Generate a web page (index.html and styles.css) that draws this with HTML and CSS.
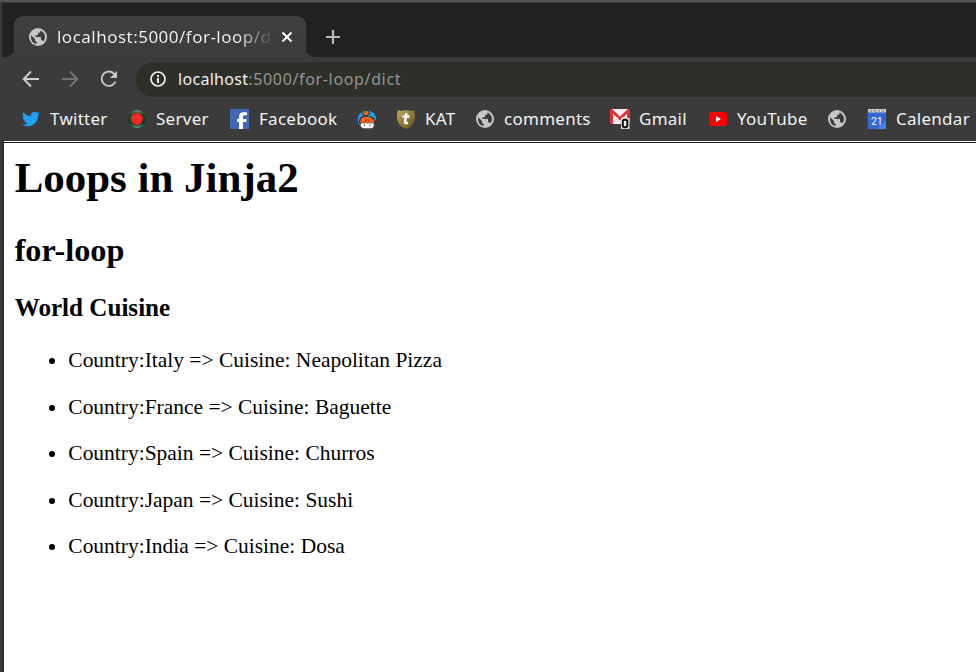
FILE: index.html
```html
<!DOCTYPE html>
<html lang="en">
<head>
<meta charset="utf-8">
<title>Loops in Jinja2</title>
<link rel="stylesheet" href="styles.css">
</head>
<body>
<svg class="defs" aria-hidden="true">
  <symbol id="globe" viewBox="0 0 18 18">
    <circle cx="9" cy="9" r="9" fill="#c6c6c6"/>
    <path d="M2 7.300 6 11v1c0 1 .6 1.600 1.600 1.700V16C4.300 15.500 2 12.700 2 9zM11.300 2.400C14 3.300 16 5.800 16 9c0 1.600-.6 3.200-1.600 4.400-.3-.7-.8-1.100-1.600-1.100H12V10c0-.7-.4-1-1-1H6.500V7.300h1.600c.6 0 1-.4 1-1V4.800h1.300c.7 0 1.200-.8.900-2.400z" fill="#3b3b3b"/>
  </symbol>
</svg>
<div class="window">
  <header class="tabstrip">
    <div class="tab">
      <svg class="tab-icon"><use href="#globe"/></svg>
      <span class="tab-title">localhost:5000/for-loop/d</span>
      <svg class="close" viewBox="0 0 12 12"><path d="M1.500 1.500l9 9M10.500 1.500l-9 9" stroke="#fff" stroke-width="2"/></svg>
    </div>
    <svg class="plus" viewBox="0 0 16 16"><path d="M8 1v14M1 8h14" stroke="#b8b8b8" stroke-width="2.200"/></svg>
  </header>
  <div class="toolbar">
    <svg class="nav" viewBox="0 0 18 18"><path d="M17 9H2M9 1.500 1.700 9 9 16.500" fill="none" stroke="#d0d0d0" stroke-width="1.900"/></svg>
    <svg class="nav" viewBox="0 0 18 18"><path d="M1 9h15M9 1.500 16.300 9 9 16.500" fill="none" stroke="#757575" stroke-width="1.900"/></svg>
    <svg class="nav" viewBox="0 0 18 18"><path d="M15.500 11.500A7.200 7.200 0 1 1 14.500 4.200" fill="none" stroke="#c8c8c8" stroke-width="1.900"/><path d="M17 1v7h-7z" fill="#c8c8c8"/></svg>
    <div class="omnibox">
      <svg class="info" viewBox="0 0 16 16"><circle cx="8" cy="8" r="7" fill="none" stroke="#eee" stroke-width="1.700"/><path d="M8 7v5M8 4v2" stroke="#eee" stroke-width="2"/></svg>
      <span class="url"><b>localhost</b>:5000/for-loop/dict</span>
    </div>
  </div>
  <nav class="bookmarks">
    <div class="bm bm-twitter"><svg viewBox="0 0 24 24"><path fill="#1da1f2" d="M23.950 4.600a10 10 0 0 1-2.800.8 4.900 4.900 0 0 0 2.160-2.700 10 10 0 0 1-3.130 1.200 4.920 4.920 0 0 0-8.380 4.480A13.960 13.960 0 0 1 1.670 3.150a4.930 4.930 0 0 0 1.520 6.570 4.900 4.900 0 0 1-2.230-.61v.06a4.930 4.930 0 0 0 3.950 4.830 5 5 0 0 1-2.210.08 4.940 4.940 0 0 0 4.600 3.420A9.870 9.870 0 0 1 0 19.540a13.990 13.990 0 0 0 7.550 2.210c9.050 0 14-7.500 14-13.980l-.02-.63a9.940 9.940 0 0 0 2.420-2.540z"/></svg><span>Twitter</span></div>
    <div class="bm bm-server"><svg viewBox="0 0 20 20"><defs><radialGradient id="red"><stop offset="0" stop-color="#ff3030"/><stop offset=".8" stop-color="#f82028"/><stop offset="1" stop-color="#b02820"/></radialGradient><linearGradient id="green" x2="0" y2="1"><stop offset="0" stop-color="#6a9a7a"/><stop offset=".25" stop-color="#0c4d23"/><stop offset=".75" stop-color="#083c18"/><stop offset="1" stop-color="#6a9a7a"/></linearGradient></defs><circle cx="10" cy="10" r="9" fill="url(#green)"/><circle cx="9.800" cy="9.800" r="6.200" fill="url(#red)"/></svg><span>Server</span></div>
    <div class="bm bm-facebook"><svg viewBox="0 0 20 20"><path d="M0 0h19v20H0z" fill="#4267b2"/><path d="M9 20v-7H7v-3h2V8c0-3.300 1.600-4.700 4.500-4.700H17v3h-2.200c-1.200 0-1.800.5-1.800 1.700v2h3.700l-.5 3H13v7z" fill="#fff"/></svg><span>Facebook</span></div>
    <div class="bm bm-ninja"><svg viewBox="0 0 20 20"><circle cx="10" cy="10.500" r="9.300" fill="#2499ed"/><path d="M2.500 12.500c.5-4 3.500-5.500 7-5.500s8 2 9 6l-1 1.500H3.500z" fill="#fa641e" stroke="#16212b" stroke-width="1.200"/><ellipse cx="9" cy="4" rx="3.300" ry="2.800" fill="#fa641e" stroke="#25221e"/><path d="m5.500 3 2.500-.5M11.500 5.500l1.500 3" fill="none" stroke="#198a3b" stroke-width="2"/><path d="M8 11.500q3-1.500 5 .5" fill="none" stroke="#7a3013" stroke-width=".8"/><path d="M3.500 14h13.500v3.500L15 19.500H6l-2.500-2z" fill="#fff" stroke="#333" stroke-width=".5"/><path d="M7.500 15.300v1.500m5.500-1.500v1.500" stroke="#444" stroke-width="1"/></svg></div>
    <div class="bm bm-kat"><svg viewBox="0 0 20 20"><defs><linearGradient id="gold" x2="1" y2="1"><stop offset="0" stop-color="#c4ad65"/><stop offset=".5" stop-color="#91793a"/><stop offset="1" stop-color="#665126"/></linearGradient></defs><path d="m2 1 3 1 5-1 5 1 3-1 1 5q1 10-9 14Q0 16 1 6z" fill="url(#gold)"/><path d="M10.500 4 9 13q0 2 3 .7M6.500 7.500h7" fill="none" stroke="#fff" stroke-width="2.500"/></svg><span>KAT</span></div>
    <div class="bm bm-comments"><svg viewBox="-1 -1 20 20"><use href="#globe" width="18" height="18"/></svg><span>comments</span></div>
    <div class="bm bm-gmail"><svg viewBox="0 0 20 20"><path d="M0 0h20v15H0z" fill="#f3eeee"/><path d="M1.500 15V1.500l8.500 8 8.500-8V15" fill="none" stroke="#d93438" stroke-width="3"/><path d="m3 14 5-6m9 6-5-6" stroke="#d9caca"/><path d="M11 9h8.500v11H11z" fill="#d8d8d8"/><rect x="12.800" y="10.800" width="4.500" height="7.500" rx="2" fill="#eee" stroke="#111" stroke-width="2"/></svg><span>Gmail</span></div>
    <div class="bm bm-youtube"><svg viewBox="0 0 20 20"><rect x="1" y="3" width="18" height="14" rx="3" fill="#f00"/><path d="m8 7 5 3-5 3z" fill="#fff"/></svg><span>YouTube</span></div>
    <div class="bm bm-globe"><svg viewBox="-1 -1 20 20"><use href="#globe" width="18" height="18"/></svg></div>
    <div class="bm bm-calendar"><svg viewBox="0 0 20 20"><path d="M1 0h18v5H1z" fill="#c9c9c9"/><path d="M4 1v2m4-2v2m4-2v2m4-2v2" stroke="#777"/><path d="M.5 3.500h18.500V20H.5z" fill="#3367d6"/><path d="m14 16 5-4v8h-9z" fill="#4285f4"/><text x="9.800" y="15.500" text-anchor="middle" class="day">21</text></svg><span>Calendar</span></div>
  </nav>
  <main class="page">
    <h1>Loops in Jinja2</h1>
    <h2>for-loop</h2>
    <h3>World Cuisine</h3>
    <ul>
      <li><p>Country:Italy =&gt; Cuisine: Neapolitan Pizza</p></li>
      <li><p>Country:France =&gt; Cuisine: Baguette</p></li>
      <li><p>Country:Spain =&gt; Cuisine: Churros</p></li>
      <li><p>Country:Japan =&gt; Cuisine: Sushi</p></li>
      <li><p>Country:India =&gt; Cuisine: Dosa</p></li>
    </ul>
  </main>
</div>
</body>
</html>
```
FILE: styles.css
```css
* { box-sizing: border-box; }
body { margin: 0; background: #3b3b3b; }
.defs { position: absolute; width: 0; height: 0; }
svg { flex: none; display: block; }
.window {
  width: 976px;
  height: 672px;
  overflow: hidden;
  display: flex;
  flex-direction: column;
  background: #3b3b3b;
  font-family: "Noto Sans", sans-serif;
  color: #f2f2f2;
}
.tabstrip {
  height: 57px;
  flex: none;
  display: flex;
  align-items: flex-end;
  padding-left: 14px;
  background: #222;
  border-top: 2px solid #535454;
  box-shadow: inset 2px 1px 0 #3a3a3a;
}
.tab {
  position: relative;
  width: 292px;
  height: 41px;
  display: flex;
  align-items: center;
  padding-left: 15px;
  background: linear-gradient(#3e4040, #3b3b3b);
  border-radius: 9px 9px 0 0;
}
.tab::before, .tab::after {
  content: "";
  position: absolute;
  bottom: 0;
  width: 8px;
  height: 8px;
}
.tab::before { left: -8px; background: radial-gradient(circle at 0 0, #222 7.5px, #3b3b3b 8px); }
.tab::after { right: -8px; background: radial-gradient(circle at 100% 0, #222 7.5px, #3b3b3b 8px); }
.tab-icon { width: 18px; height: 18px; }
.tab-title {
  width: 222px;
  margin-left: 10px;
  white-space: nowrap;
  font-size: 17px;
  letter-spacing: 0.48px;
  background: linear-gradient(to right, #f2f2f2 180px, rgba(242, 242, 242, 0) 217px);
  -webkit-background-clip: text;
  background-clip: text;
  color: transparent;
}
.close { width: 12px; height: 12px; margin-left: 2px; }
.plus { width: 16px; height: 16px; margin: 0 0 12px 19px; }
.toolbar {
  height: 45px;
  flex: none;
  display: flex;
  align-items: center;
  padding: 0 0 1px 22px;
}
.nav { width: 18px; height: 18px; margin-right: 21px; }
.omnibox {
  flex: 1;
  height: 35px;
  display: flex;
  align-items: center;
  margin-left: -3px;
  padding-left: 14px;
  border-radius: 18px 0 0 18px;
  background: #2f2f2a;
}
.info { width: 16px; height: 16px; margin-right: 12px; }
.url { font-size: 16px; letter-spacing: 0.65px; color: #949490; white-space: nowrap; }
.url b { font-weight: 400; letter-spacing: 0.3px; color: #f0f0f0; }
.bookmarks {
  height: 39px;
  flex: none;
  display: flex;
  align-items: center;
  padding: 0 0 5px 21px;
  font-size: 17px;
  letter-spacing: 0.27px;
}
.bm {
  flex: none;
  display: flex;
  align-items: center;
  gap: 9px;
  white-space: nowrap;
}
.bm span { margin-top: -2px; }
.bm svg { width: 20px; height: 20px; }
.bm-twitter { width: 106px; }
.bm-server { width: 103px; }
.bm-facebook { width: 127px; }
.bm-ninja { width: 39px; }
.bm-kat { width: 79px; }
.bm-comments { width: 135px; }
.bm-gmail { width: 98px; }
.bm-youtube { width: 119px; }
.bm-globe { width: 40px; }
.bm-calendar { width: 109px; }
.bm-twitter svg { width: 18px; height: 18px; margin: 0 1px; }
.day { font: 10.5px Roboto, sans-serif; fill: #fff; letter-spacing: 0; }
.page {
  flex: 1;
  margin-left: 4px;
  padding: 9.67px 10.67px;
  background: #fff;
  color: #000;
  border-top: 1px solid #1a1a1a;
  box-shadow: 0 -1px #fff, -2px 0 #2e2d2b;
  margin-top: 1px;
  font-family: "Liberation Serif", serif;
  font-size: 21.47px;
}
h1 { margin: 0; font-size: 42.95px; line-height: 49px; }
h2 { margin: 30px 0 26px; font-size: 32.2px; line-height: 36px; }
h3 { margin: 0 0 26.5px; font-size: 25.12px; line-height: 28px; }
ul { margin: 0; padding-left: 53.67px; }
li { margin: 0; }
p { margin: 0 0 21.5px; line-height: 25px; }
```
